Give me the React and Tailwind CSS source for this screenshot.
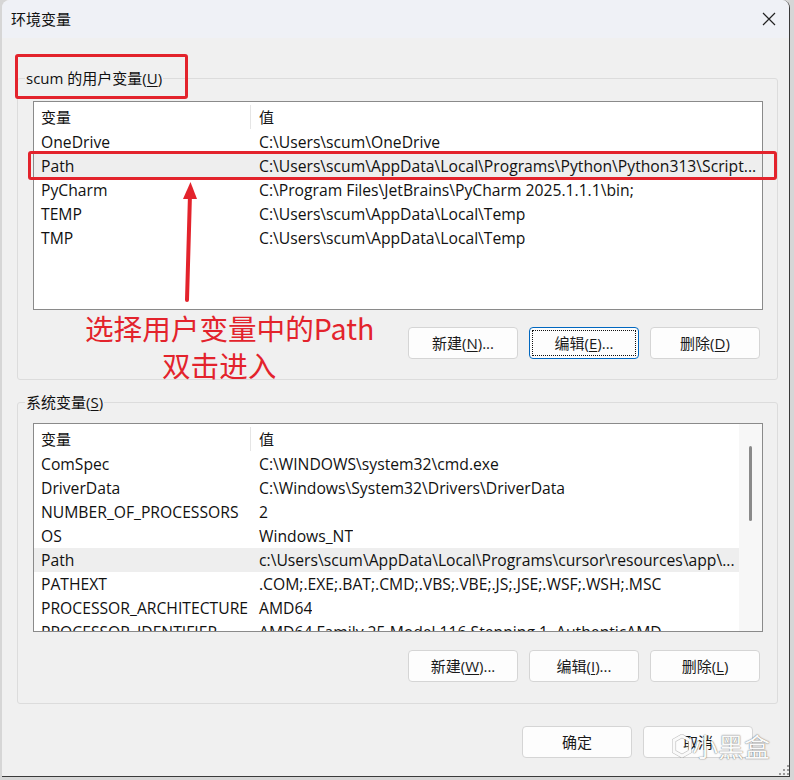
import React from "react";

const FONT = "font-['Open_Sans','Noto_Sans_CJK_SC',sans-serif]";

function Btn({ children, focused, className = "" }) {
  return (
    <div
      className={
        "w-[110px] h-[32px] rounded-[4px] flex items-center justify-center text-[15px] leading-[20px] text-[#1a1a1a] " +
        (focused
          ? "bg-[#fdfdfd] border border-[#0067c0] p-[2px] "
          : "bg-[#fdfdfd] border border-[#d5d5d5] ") +
        className
      }
    >
      {focused ? (
        <div className="w-full h-full border border-dotted border-[#111] flex items-center justify-center">
          {children}
        </div>
      ) : (
        children
      )}
    </div>
  );
}

function U({ children }) {
  return <span className="underline underline-offset-[2px] decoration-[1px]">{children}</span>;
}

function Row({ name, value, hl }) {
  return (
    <div className={"h-[24px] flex items-center shrink-0 whitespace-nowrap " + (hl ? "bg-[#eeeeee]" : "")}>
      <div className="w-[217px] pl-[7px] shrink-0 overflow-visible">{name}</div>
      <div className="pl-[8px] overflow-hidden">{value}</div>
    </div>
  );
}

function Header() {
  return (
    <div className="h-[27px] flex items-center shrink-0 text-[15px]">
      <div className="w-[217px] pl-[7px] h-[24px] flex items-center border-r border-[#e5e5e5] shrink-0">变量</div>
      <div className="pl-[8px]">值</div>
    </div>
  );
}

function List({ rows, scroll }) {
  return (
    <div className="h-[209px] border border-[#8a8a8a] bg-white flex overflow-hidden text-[15.7px] leading-[20px] text-[#111]">
      <div className="flex-1 flex flex-col overflow-hidden pt-[1px]">
        <Header />
        {rows.map((r, i) => (
          <Row key={i} {...r} />
        ))}
      </div>
      {scroll && (
        <div className="w-[23px] shrink-0 bg-[#f7f7f7] flex justify-center pt-[22px]">
          <div className="w-[3px] h-[75px] rounded-full bg-[#8a8a8a]" />
        </div>
      )}
    </div>
  );
}

export default function App() {
  const userRows = [
    { name: "OneDrive", value: "C:\\Users\\scum\\OneDrive" },
    { name: "Path", value: "C:\\Users\\scum\\AppData\\Local\\Programs\\Python\\Python313\\Script...", hl: true },
    { name: "PyCharm", value: "C:\\Program Files\\JetBrains\\PyCharm 2025.1.1.1\\bin;" },
    { name: "TEMP", value: "C:\\Users\\scum\\AppData\\Local\\Temp" },
    { name: "TMP", value: "C:\\Users\\scum\\AppData\\Local\\Temp" },
  ];
  const sysRows = [
    { name: "ComSpec", value: "C:\\WINDOWS\\system32\\cmd.exe" },
    { name: "DriverData", value: "C:\\Windows\\System32\\Drivers\\DriverData" },
    { name: "NUMBER_OF_PROCESSORS", value: "2" },
    { name: "OS", value: "Windows_NT" },
    { name: "Path", value: "c:\\Users\\scum\\AppData\\Local\\Programs\\cursor\\resources\\app\\...", hl: true },
    { name: "PATHEXT", value: ".COM;.EXE;.BAT;.CMD;.VBS;.VBE;.JS;.JSE;.WSF;.WSH;.MSC" },
    { name: "PROCESSOR_ARCHITECTURE", value: "AMD64" },
    { name: "PROCESSOR_IDENTIFIER", value: "AMD64 Family 25 Model 116 Stepping 1, AuthenticAMD" },
  ];

  return (
    <div className={"relative w-[794px] h-[780px] bg-[#d6d6d6] overflow-hidden " + FONT}>
      <div className="ml-[2px] w-[788px] h-[777px] bg-[#f0f0f0] rounded-t-[8px] border-b-[1px] border-r-[1px] border-[#3a3a3a] flex flex-col overflow-hidden">
        {/* title bar */}
        <div className="h-[38px] shrink-0 bg-[#eff1f6] flex items-center justify-between pl-[9px] pr-[10px]">
          <div className="text-[15px] leading-[20px] text-[#111] -mt-[1px]">环境变量</div>
          <svg width="14" height="14" viewBox="0 0 14 14" className="mr-[3px]">
            <path d="M1 1 L13 13 M13 1 L1 13" stroke="#222" strokeWidth="1.2" />
          </svg>
        </div>

        <div className="flex flex-col pl-[15px] pr-[11px]">
          {/* user vars group */}
          <div className="mt-[40px] h-[302px] border border-[#dcdcdc] rounded-[3px] flex flex-col pl-[15px] pr-[14px]">
            <div className="-mt-[11px] -ml-[8px] w-fit bg-[#f0f0f0] px-[1px] text-[15px] leading-[20px] text-[#111]">
              scum 的用户变量(<U>U</U>)
            </div>
            <div className="mt-[13px]">
              <List rows={userRows} />
            </div>
            <div className="mt-[17px] flex justify-end gap-[11px] pr-[3px]">
              <Btn>
                新建(<U>N</U>)...
              </Btn>
              <Btn focused>
                编辑(<U>E</U>)...
              </Btn>
              <Btn>
                删除(<U>D</U>)
              </Btn>
            </div>
          </div>

          {/* system vars group */}
          <div className="mt-[22px] h-[302px] border border-[#dcdcdc] rounded-[3px] flex flex-col pl-[15px] pr-[14px]">
            <div className="-mt-[11px] -ml-[8px] w-fit bg-[#f0f0f0] px-[1px] text-[15px] leading-[20px] text-[#111]">
              系统变量(<U>S</U>)
            </div>
            <div className="mt-[11px]">
              <List rows={sysRows} scroll />
            </div>
            <div className="mt-[18px] flex justify-end gap-[11px] pr-[3px]">
              <Btn>
                新建(<U>W</U>)...
              </Btn>
              <Btn>
                编辑(<U>I</U>)...
              </Btn>
              <Btn>
                删除(<U>L</U>)
              </Btn>
            </div>
          </div>

          {/* dialog buttons */}
          <div className="mt-[22px] flex justify-end gap-[11px] pr-[25px]">
            <Btn>确定</Btn>
            <Btn>取消</Btn>
          </div>
        </div>
      </div>

      {/* annotations */}
      <div className="absolute left-[15px] top-[54px] w-[173px] h-[45px] border-[3px] border-[#e3232c] rounded-[3px]" />
      <div className="absolute left-[28px] top-[151px] w-[749px] h-[29px] border-[3px] border-[#e3232c] rounded-[3px]" />
      <svg className="absolute left-[177px] top-[180px]" width="24" height="124" viewBox="0 0 24 124">
        <path d="M13 14 L10 120" stroke="#e3232c" strokeWidth="4" strokeLinecap="round" />
        <path d="M13.5 2 L6 19 L20 19 Z" fill="#e3232c" />
      </svg>
      <div className="absolute left-[85px] top-[309px] text-[28.6px] leading-[37px] text-[#e3232c] font-['Noto_Sans_CJK_SC',sans-serif] whitespace-nowrap">
        选择用户变量中的Path
      </div>
      <div className="absolute left-[162px] top-[346px] text-[28.6px] leading-[37px] text-[#e3232c] font-['Noto_Sans_CJK_SC',sans-serif] whitespace-nowrap">
        双击进入
      </div>

      {/* watermark */}
      <div className="absolute left-[672px] top-[731px] flex items-center gap-0 text-[#fafafa] [text-shadow:0_0_1px_rgba(0,0,0,0.6),0_0_2px_rgba(0,0,0,0.25)] font-['Noto_Sans_CJK_SC',sans-serif]">
        <svg width="20" height="24" viewBox="0 0 20 24">
          <path d="M10 2 L18 6.5 L18 17.5 L10 22 L2 17.5 L2 6.5 Z" fill="none" stroke="rgba(0,0,0,0.25)" strokeWidth="4.2" />
          <path d="M10 2 L18 6.5 L18 17.5 L10 22 L2 17.5 L2 6.5 Z" fill="none" stroke="#fafafa" strokeWidth="3" />
        </svg>
        <span className="text-[26px] leading-[30px]">小黑盒</span>
      </div>
      <svg className="absolute left-[779px] top-[765px]" width="12" height="12" viewBox="0 0 12 12">
        <g fill="#9a9a9a">
          <rect x="8" y="0" width="2" height="2" />
          <rect x="4" y="4" width="2" height="2" />
          <rect x="8" y="4" width="2" height="2" />
          <rect x="0" y="8" width="2" height="2" />
          <rect x="4" y="8" width="2" height="2" />
          <rect x="8" y="8" width="2" height="2" />
        </g>
      </svg>
    </div>
  );
}
